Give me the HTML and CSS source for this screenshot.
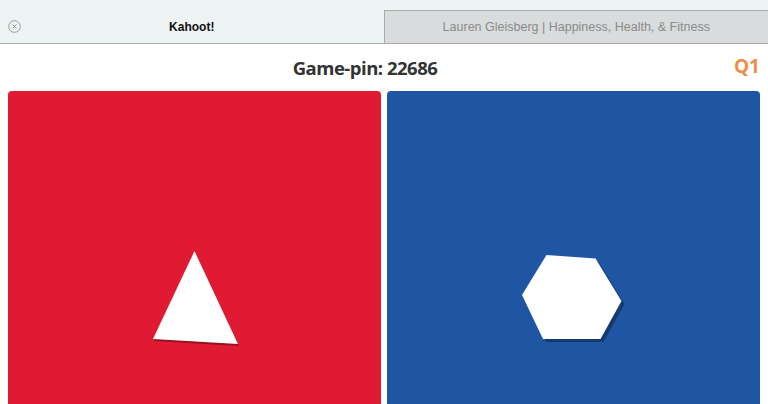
FILE: index.html
```html
<!DOCTYPE html>
<html>
<head>
<meta charset="utf-8">
<link rel="stylesheet" href="styles.css">
</head>
<body>
<div class="tabbar">
  <div class="tab active">
    <span class="close">
      <svg width="13" height="13" viewBox="0 0 13 13"><circle cx="6.5" cy="6.5" r="5.8" fill="none" stroke="#9a9a9a" stroke-width="1"/><path d="M4.5 4.5 L8.5 8.5 M8.5 4.5 L4.5 8.5" stroke="#8a8a8a" stroke-width="1"/></svg>
    </span>
    <span class="tab-title">Kahoot!</span>
  </div>
  <div class="tab inactive">
    <span class="tab-title">Lauren Gleisberg | Happiness, Health, &amp; Fitness</span>
  </div>
</div>
<div class="header">
  <div class="pin">Game-pin: 22686</div>
  <div class="qnum">Q1</div>
</div>
<div class="answers">
  <div class="panel red">
    <svg class="shape" width="100" height="100" viewBox="0 0 100 100">
      <polygon points="50.5,6 9,94 94,99" fill="#8c0f1e" opacity="0.85"/>
      <polygon points="49.5,4 8,92 93,97" fill="#ffffff"/>
    </svg>
  </div>
  <div class="panel blue">
    <svg class="shape" width="110" height="100" viewBox="0 0 110 100">
      <polygon points="30.5,11 79.5,14.5 105.5,57 84.5,95 27,95 6,51" fill="#153a70"/>
      <polygon points="27.5,8 76.5,11.5 102.5,54 81.5,92 24,92 3,48" fill="#ffffff"/>
    </svg>
  </div>
</div>
</body>
</html>
```
FILE: styles.css
```css
html, body {
  margin: 0;
  padding: 0;
  width: 768px;
  height: 404px;
  overflow: hidden;
  background: #ffffff;
}
.tabbar {
  display: flex;
  height: 44px;
  background: #eef3f3;
  font-family: "Liberation Sans", Arial, sans-serif;
}
.tab {
  flex: 1;
  display: flex;
  align-items: center;
  justify-content: center;
  position: relative;
  box-sizing: border-box;
}
.tab.active {
  border-bottom: 1px solid #ababab;
}
.tab.inactive {
  margin-top: 10px;
  background: #d9dcdd;
  border: 1px solid #ababab;
  border-right: none;
}
.tab.active .tab-title {
  font-size: 12px;
  font-weight: bold;
  color: #111;
  padding-top: 11px;
}
.tab.inactive .tab-title {
  font-size: 12.5px;
  color: #8a8a8a;
  padding-bottom: 1px;
}
.close {
  position: absolute;
  left: 8px;
  top: 20px;
  width: 13px;
  height: 13px;
  display: block;
}
.close svg { display: block; }
.header {
  height: 47px;
  display: flex;
  align-items: center;
  justify-content: center;
  position: relative;
  font-family: "Open Sans", sans-serif;
  font-weight: bold;
}
.pin {
  font-size: 18.5px;
  color: #333333;
  letter-spacing: -0.5px;
  margin-left: -38px;
}
.qnum {
  position: absolute;
  right: 8px;
  top: 9px;
  font-size: 19px;
  color: #f08c4a;
}
.answers {
  display: flex;
  gap: 6px;
  padding: 0 8px;
  height: 313px;
  overflow: hidden;
  align-items: flex-start;
}
.panel {
  flex: 1;
  height: 412px;
  border-radius: 4px;
  display: flex;
  align-items: center;
  justify-content: center;
}
.red { background: #e01a32; }
.blue { background: #1f56a4; }
.shape { display: block; }
```
